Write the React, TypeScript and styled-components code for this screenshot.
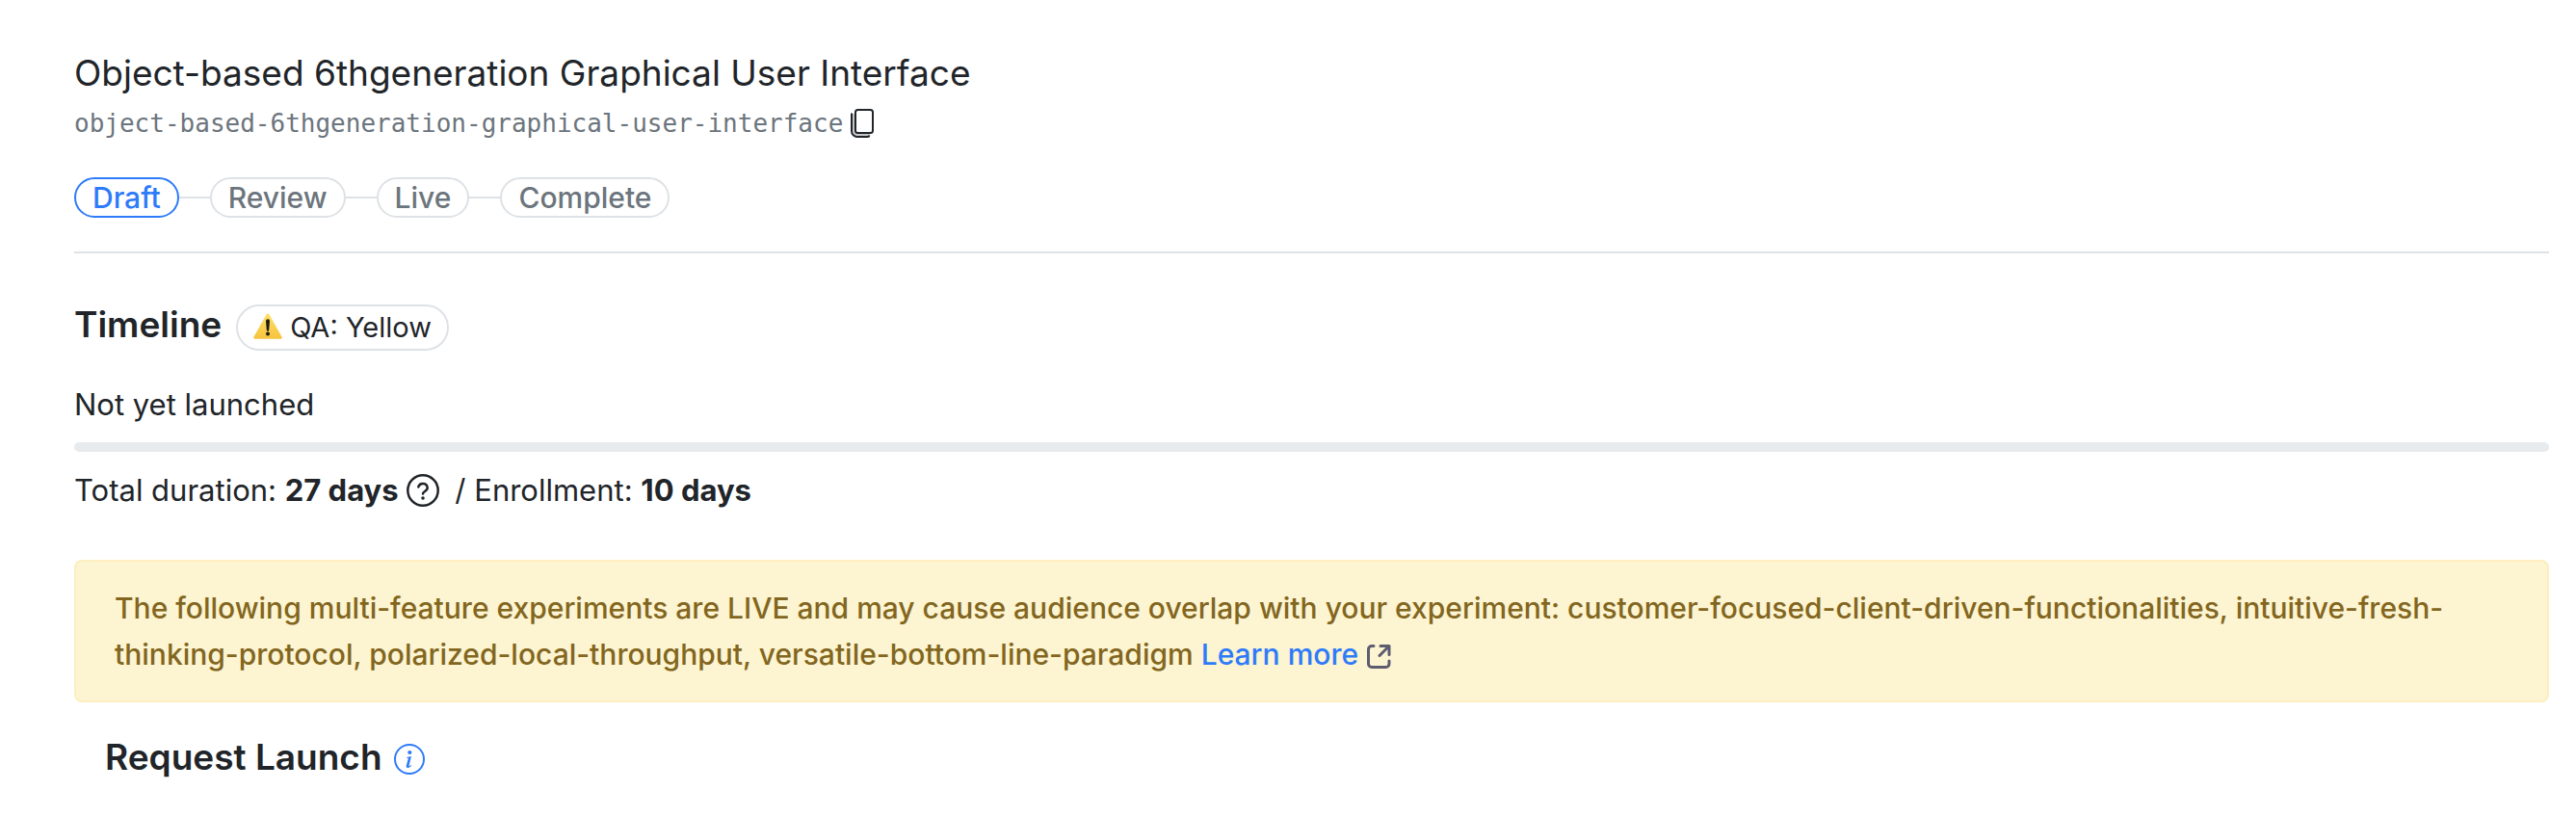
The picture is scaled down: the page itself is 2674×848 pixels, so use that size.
import React from "react";
import styled, { createGlobalStyle } from "styled-components";

const colors = {
  text: "#212529",
  muted: "#6c757d",
  border: "#dee2e6",
  track: "#e7ebee",
  primary: "#2e7bf9",
  warningText: "#826620",
  warningFill: "#fdf4d1",
  warningBorder: "#fdeebf",
  external: "#5e5c70",
};

const GlobalStyle = createGlobalStyle`
  *, *::before, *::after {
    box-sizing: border-box;
  }
  body {
    margin: 0;
    background: #fff;
    color: ${colors.text};
    font-family: Inter, "Liberation Sans", sans-serif;
    font-size: 31px;
    line-height: 48px;
  }
`;

const Page = styled.main`
  padding: 48px 28px 24px 77px;
`;

const Header = styled.header`
  display: flex;
  flex-direction: column;
  padding-bottom: 35px;
  border-bottom: 2px solid ${colors.border};
`;

const Title = styled.h1`
  margin: 0;
  font-size: 37px;
  font-weight: 400;
  line-height: 56px;
`;

const SlugRow = styled.div`
  display: flex;
  align-items: center;
  gap: 8px;
  height: 48px;
`;

const Slug = styled.code`
  color: ${colors.muted};
  font-family: "DejaVu Sans Mono", monospace;
  font-size: 26px;
`;

const IconButton = styled.button`
  display: flex;
  padding: 0;
  border: 0;
  background: none;
  color: ${colors.text};
  cursor: pointer;
`;

const Steps = styled.ol`
  display: flex;
  align-items: center;
  margin: 32px 0 0;
  padding: 0;
  list-style: none;
`;

const Step = styled.li`
  display: flex;
  align-items: center;

  & + &::before {
    content: "";
    width: 32px;
    height: 2px;
    background: ${colors.border};
  }
`;

const StepPill = styled.span<{ $active?: boolean }>`
  padding: 0 17px;
  border: 2px solid ${(p) => (p.$active ? colors.primary : colors.border)};
  border-radius: 21px;
  color: ${(p) => (p.$active ? colors.primary : colors.muted)};
  font-size: 30px;
  font-weight: 500;
  line-height: 38px;
`;

const TimelineHead = styled.div`
  display: flex;
  align-items: baseline;
  gap: 15px;
  margin-top: 50px;
`;

const Heading = styled.h2`
  margin: 0;
  font-size: 37px;
  font-weight: 600;
  line-height: 48px;
`;

const Badge = styled.span`
  padding: 0 16px;
  border: 2px solid ${colors.border};
  border-radius: 24px;
  font-size: 29px;
  line-height: 44px;

  svg {
    margin-right: 8px;
    vertical-align: -2px;
  }
`;

const Status = styled.p`
  margin: 32px 0 0;
`;

const Track = styled.div`
  height: 10px;
  margin: 15px 0 16px;
  border-radius: 5px;
  background: ${colors.track};
`;

const Durations = styled.p`
  display: flex;
  align-items: center;
  gap: 8px;
  margin: 0;
`;

const Alert = styled.div`
  margin-top: 48px;
  padding: 24px 40px;
  border: 2px solid ${colors.warningBorder};
  border-radius: 8px;
  background: ${colors.warningFill};
  color: ${colors.warningText};
  font-size: 30px;
  font-weight: 500;
`;

const LearnMore = styled.a`
  color: ${colors.primary};
  text-decoration: none;

  svg {
    margin-left: 8px;
    vertical-align: -4px;
  }
`;

const LaunchHead = styled.div`
  display: flex;
  align-items: center;
  gap: 12px;
  padding: 33px 32px 0;
`;

const CopyIcon = () => (
  <svg width="24" height="30" viewBox="0 0 24 30" fill="none" aria-hidden="true">
    <path d="M3 5V22a5 5 0 0 0 5 5h12" stroke="#c4c6c8" strokeWidth="2" />
    <path
      d="M1 4.500V23a6 6 0 0 0 6 6h10.500a2 2 0 0 0 2-1.500"
      stroke="currentColor"
      strokeWidth="2"
    />
    <rect x="5" y="1" width="18" height="24" rx="2.500" fill="#fff" stroke="currentColor" strokeWidth="2" />
  </svg>
);

const WarningIcon = () => (
  <svg width="30" height="27" viewBox="0 0 30 27" aria-hidden="true">
    <defs>
      <linearGradient id="warning-fill" x1="0" y1="0" x2="0" y2="1">
        <stop offset="0" stopColor="#fde06a" />
        <stop offset="1" stopColor="#f6c33c" />
      </linearGradient>
    </defs>
    <path
      d="M13.600 1.200a1.600 1.600 0 0 1 2.800 0l13.200 23.500a1.300 1.300 0 0 1-1.200 2H1.600a1.300 1.300 0 0 1-1.200-2z"
      fill="url(#warning-fill)"
    />
    <path d="M13 8.300a2 2 0 0 1 4 0l-.8 9.200a1.200 1.200 0 0 1-2.400 0z" fill="#1d1a12" />
    <circle cx="15" cy="21.600" r="2" fill="#1d1a12" />
  </svg>
);

const HelpIcon = () => (
  <svg width="34" height="34" viewBox="0 0 34 34" fill="none" aria-hidden="true">
    <circle cx="17" cy="17" r="15.700" stroke="currentColor" strokeWidth="2.500" />
    <path
      d="M12.300 13.400a4.800 4.800 0 0 1 9.400 1.200c0 3.100-4.700 3.600-4.700 5.800"
      stroke="currentColor"
      strokeWidth="2.500"
      strokeLinecap="round"
    />
    <circle cx="17" cy="25" r="1.800" fill="currentColor" />
  </svg>
);

const ExternalIcon = () => (
  <svg
    width="26"
    height="26"
    viewBox="0 0 26 26"
    fill="none"
    stroke={colors.external}
    strokeWidth="3"
    strokeLinecap="round"
    aria-hidden="true"
  >
    <path d="M8 2.500H6A3.500 3.500 0 0 0 2.500 6v15A3.500 3.500 0 0 0 6 24.500h14.500A3.500 3.500 0 0 0 24 21v-3" />
    <path d="M15 2.500h9v9M24 2.500 14 12.500" strokeLinejoin="round" />
  </svg>
);

const InfoIcon = () => (
  <svg width="32" height="32" viewBox="0 0 32 32" fill="none" aria-hidden="true">
    <circle cx="16" cy="16" r="15" stroke="currentColor" strokeWidth="2" />
    <circle cx="16.300" cy="9" r="2.100" fill="currentColor" />
    <path
      d="M13 13.900l5-.8-2.400 9.300c-.3 1.200.7 1.100 2.200-.3l.5.500c-1.300 1.600-2.600 2.400-3.900 2.400-1.500 0-2-.9-1.600-2.400l1.900-7.200c.2-.7-.1-.9-1.900-.9z"
      fill="currentColor"
    />
  </svg>
);

const InfoLink = styled.a`
  display: flex;
  margin-top: 4px;
  color: ${colors.primary};
`;

const steps = ["Draft", "Review", "Live", "Complete"];

export default function App() {
  return (
    <>
      <GlobalStyle />
      <Page>
        <Header>
          <Title>Object-based 6thgeneration Graphical User Interface</Title>
          <SlugRow>
            <Slug>object-based-6thgeneration-graphical-user-interface</Slug>
            <IconButton type="button" aria-label="Copy slug">
              <CopyIcon />
            </IconButton>
          </SlugRow>
          <Steps>
            {steps.map((step, i) => (
              <Step key={step}>
                <StepPill $active={i === 0}>{step}</StepPill>
              </Step>
            ))}
          </Steps>
        </Header>

        <section>
          <TimelineHead>
            <Heading>Timeline</Heading>
            <Badge>
              <WarningIcon />
              QA: Yellow
            </Badge>
          </TimelineHead>
          <Status>Not yet launched</Status>
          <Track role="progressbar" aria-label="Experiment progress" aria-valuenow={0} />
          <Durations>
            <span>
              Total duration: <b>27 days</b>
            </span>
            <IconButton type="button" aria-label="About total duration">
              <HelpIcon />
            </IconButton>
            <span>
              &nbsp;/ Enrollment: <b>10 days</b>
            </span>
          </Durations>
        </section>

        <Alert role="alert">
          <span>
            The following multi-feature experiments are LIVE and may cause audience overlap with
            your experiment: customer-focused-client-driven-functionalities,
            intuitive-fresh-thinking-protocol, polarized-local-throughput,
            versatile-bottom-line-paradigm
          </span>{" "}
          <LearnMore href="#learn-more">
            Learn more
            <ExternalIcon />
          </LearnMore>
        </Alert>

        <section>
          <LaunchHead>
            <Heading>Request Launch</Heading>
            <InfoLink href="#request-launch" aria-label="About requesting launch">
              <InfoIcon />
            </InfoLink>
          </LaunchHead>
        </section>
      </Page>
    </>
  );
}
